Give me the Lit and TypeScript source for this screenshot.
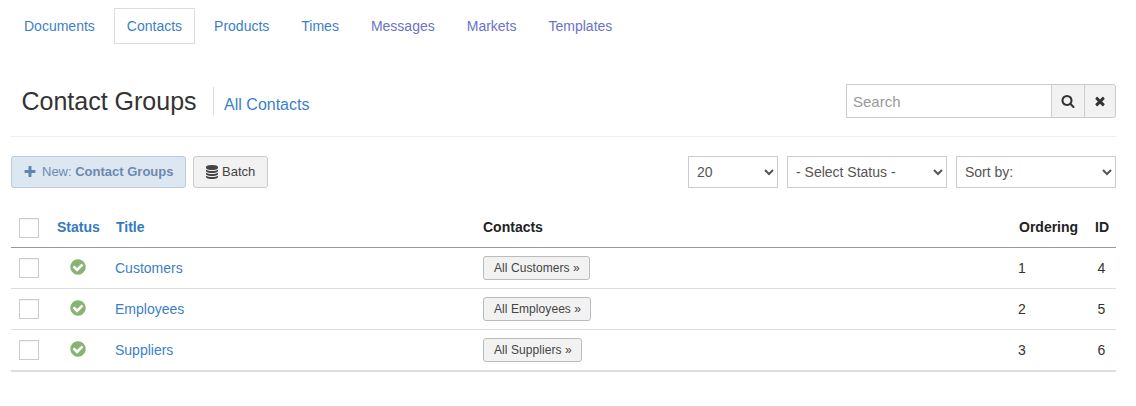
import { LitElement, html, css, svg } from "lit";
import { customElement } from "lit/decorators.js";

const P = {
  check: "M1412 734q0-28-18-46l-91-90q-19-19-45-19t-45 19l-408 407-226-226q-19-19-45-19t-45 19l-91 90q-18 18-18 46 0 27 18 45l362 362q19 19 45 19 27 0 46-19l543-543q18-18 18-45zm252 162q0 209-103 385.500t-279.500 279.500-385.500 103-385.500-103-279.500-279.500-103-385.500 103-385.500 279.500-279.500 385.500-103 385.500 103 279.500 279.500 103 385.500z",
  search: "M1216 832q0-185-131.500-316.500t-316.500-131.500-316.500 131.500-131.500 316.500 131.500 316.500 316.500 131.500 316.500-131.500 131.500-316.500zm512 832q0 52-38 90t-90 38q-54 0-90-38l-343-342q-179 124-399 124-143 0-273.500-55.500t-225-150-150-225-55.500-273.500 55.500-273.500 150-225 225-150 273.500-55.500 273.500 55.500 225 150 150 225 55.500 273.500q0 220-124 399l343 343q37 37 37 90z",
  times: "M1490 1322q0 40-28 68l-136 136q-28 28-68 28t-68-28l-294-294-294 294q-28 28-68 28t-68-28l-136-136q-28-28-28-68t28-68l294-294-294-294q-28-28-28-68t28-68l136-136q28-28 68-28t68 28l294 294 294-294q28-28 68-28t68 28l136 136q28 28 28 68t-28 68l-294 294 294 294q28 28 28 68z",
  plus: "M1600 736v192q0 40-28 68t-68 28h-416v416q0 40-28 68t-68 28h-192q-40 0-68-28t-28-68v-416h-416q-40 0-68-28t-28-68v-192q0-40 28-68t68-28h416v-416q0-40 28-68t68-28h192q40 0 68 28t28 68v416h416q40 0 68 28t28 68z",
  db: "M896 768q237 0 443-43t325-127v170q0 69-103 128t-280 93.500-385 34.500-385-34.500-280-93.500-103-128v-170q119 84 325 127t443 43zm0 768q237 0 443-43t325-127v170q0 69-103 128t-280 93.500-385 34.500-385-34.500-280-93.500-103-128v-170q119 84 325 127t443 43zm0-384q237 0 443-43t325-127v170q0 69-103 128t-280 93.500-385 34.500-385-34.500-280-93.500-103-128v-170q119 84 325 127t443 43zm0-1152q208 0 385 34.500t280 93.500 103 128v128q0 69-103 128t-280 93.500-385 34.500-385-34.500-280-93.500-103-128v-128q0-69 103-128t280-93.500 385-34.500z",
};
const icon = (d: string, size: number) =>
  html`<svg class="ico" width=${size} height=${size} viewBox="0 0 1792 1792" fill="currentColor">${svg`<path d=${d}></path>`}</svg>`;

const NAV = [
  ["Documents", false, false],
  ["Contacts", true, false],
  ["Products", false, false],
  ["Times", false, false],
  ["Messages", false, true],
  ["Markets", false, true],
  ["Templates", false, true],
] as const;

const ROWS = [
  ["Customers", "All Customers", 1, 4],
  ["Employees", "All Employees", 2, 5],
  ["Suppliers", "All Suppliers", 3, 6],
] as const;

@customElement("app-root")
export class AppRoot extends LitElement {
  static styles = css`
    :host {
      display: block;
      box-sizing: border-box;
      width: 1136px;
      height: 406px;
      padding: 8px 20px 0 11px;
      background: #fff;
      color: #333;
      font: 14px/20px "Liberation Sans", Arial, sans-serif;
      overflow: hidden;
    }
    * { box-sizing: border-box; }
    a { color: #3c7fc8; text-decoration: none; }
    .ico { display: block; flex: none; }

    .nav { display: flex; gap: 6px; height: 36px; }
    .nav a { padding: 7px 12px; border: 1px solid transparent; }
    .nav a.active { border-color: #ddd; }
    .nav a.visited { color: #6c72c6; }

    .head {
      display: flex;
      align-items: center;
      margin-top: 40px;
      padding: 0 0 18px 10.5px;
      border-bottom: 1px solid #eee;
    }
    h1 { margin: 0 16.5px 0 0; font-size: 25px; line-height: 34px; font-weight: 400; color: #333; }
    .sub {
      height: 28px;
      padding: 6px 0 0 10px;
      border-left: 1px solid #ddd;
      font-size: 16px;
      line-height: 24px;
    }
    .search { display: flex; margin-left: auto; height: 34px; }
    .search input {
      width: 205px;
      height: 34px;
      padding: 1px 6px 0;
      border: 1px solid #ccc;
      border-right: 0;
      border-radius: 0;
      background: #fff;
      outline: 0;
      font: 15px "Liberation Sans", Arial, sans-serif;
      color: #555;
    }
    .search input::placeholder { color: #999; opacity: 1; }
    .search button {
      display: flex;
      align-items: center;
      justify-content: center;
      height: 34px;
      padding: 0;
      border: 1px solid #ccc;
      background: #f2f2f2;
      color: #333;
    }
    .search .go { width: 34px; }
    .search .clear { width: 32px; margin-left: -1px; border-radius: 0 3px 3px 0; }

    .tools { display: flex; align-items: center; margin-top: 19px; height: 32px; }
    .btn {
      display: flex;
      align-items: center;
      height: 32px;
      border: 1px solid #ccc;
      border-radius: 3px;
      background: #f2f2f2;
      color: #444;
      font: 13px/20px "Liberation Sans", Arial, sans-serif;
      padding: 0;
    }
    .new {
      width: 175px;
      padding-left: 10.5px;
      gap: 5.5px;
      border-color: #b9cbdd;
      background: #dde7f2;
      color: #6b89b3;
    }
    .new b { font-weight: 700; }
    .new .ico { color: #5f85b4; }
    .batch { width: 75px; margin-left: 7px; padding-left: 11px; gap: 3px; }
    .batch .ico { color: #444; }
    select {
      height: 32px;
      margin-left: 9px;
      padding: 0 4px;
      border: 1px solid #ccc;
      border-radius: 0;
      background: #fff;
      color: #555;
      font: 14px "Liberation Sans", Arial, sans-serif;
      outline: 0;
    }
    .s1 { margin-left: auto; width: 90px; }
    .s2, .s3 { width: 160px; }

    table {
      width: 1105px;
      margin-top: 20px;
      border-collapse: collapse;
      table-layout: fixed;
    }
    .c1 { width: 38px; } .c2 { width: 59px; } .c3 { width: 367px; }
    .c4 { width: 536px; } .c5 { width: 76px; } .c6 { width: 29px; }
    th, td { padding: 0 8px; text-align: left; vertical-align: middle; }
    th { height: 39px; border-bottom: 1px solid #999; font-weight: 700; color: #222; }
    th a { color: #337ac0; }
    th .box { margin-top: 2px; }
    td { height: 41px; border-bottom: 1px solid #ddd; }
    tr:last-child td { height: 42px; border-bottom: 2px solid #ddd; }
    td.tight { padding-left: 7px; }
    .ctr { text-align: center; }
    .box {
      display: block;
      appearance: none;
      width: 20px;
      height: 20px;
      margin: 0;
      border: 1px solid #ccc;
      background: #fff;
      box-shadow: inset 0 1px 1px rgba(0, 0, 0, .05);
    }
    .ok { display: flex; justify-content: center; color: #89b373; margin: -2px 0 0 -1px; }
    .mini {
      display: inline-block;
      height: 24px;
      padding: 0 9px 0 10px;
      border: 1px solid #bbb;
      border-radius: 3px;
      background: #f2f2f2;
      color: #444;
      font: 12px/22px "Liberation Sans", Arial, sans-serif;
      letter-spacing: .07px;
      vertical-align: middle;
    }
  `;

  render() {
    return html`
      <nav class="nav">
        ${NAV.map(
          ([t, active, visited]) =>
            html`<a href="#" class="${active ? "active" : ""} ${visited ? "visited" : ""}">${t}</a>`
        )}
      </nav>

      <header class="head">
        <h1>Contact Groups</h1>
        <a class="sub" href="#">All Contacts</a>
        <div class="search">
          <input type="text" placeholder="Search" />
          <button class="go">${icon(P.search, 14)}</button>
          <button class="clear">${icon(P.times, 14)}</button>
        </div>
      </header>

      <div class="tools">
        <button class="btn new">${icon(P.plus, 14)}<span>New: <b>Contact Groups</b></span></button>
        <button class="btn batch">${icon(P.db, 14)}<span>Batch</span></button>
        <select class="s1"><option>20</option></select>
        <select class="s2"><option>- Select Status -</option></select>
        <select class="s3"><option>Sort by:</option></select>
      </div>

      <table>
        <colgroup>
          <col class="c1" /><col class="c2" /><col class="c3" /><col class="c4" /><col class="c5" /><col class="c6" />
        </colgroup>
        <thead>
          <tr>
            <th><input class="box" type="checkbox" /></th>
            <th><a href="#">Status</a></th>
            <th><a href="#">Title</a></th>
            <th>Contacts</th>
            <th>Ordering</th>
            <th>ID</th>
          </tr>
        </thead>
        <tbody>
          ${ROWS.map(
            ([title, label, ord, id]) => html`
              <tr>
                <td><input class="box" type="checkbox" /></td>
                <td><div class="ok">${icon(P.check, 18)}</div></td>
                <td class="tight"><a href="#">${title}</a></td>
                <td><a class="mini" href="#">${label} »</a></td>
                <td class="tight">${ord}</td>
                <td class="ctr">${id}</td>
              </tr>
            `
          )}
        </tbody>
      </table>
    `;
  }
}
